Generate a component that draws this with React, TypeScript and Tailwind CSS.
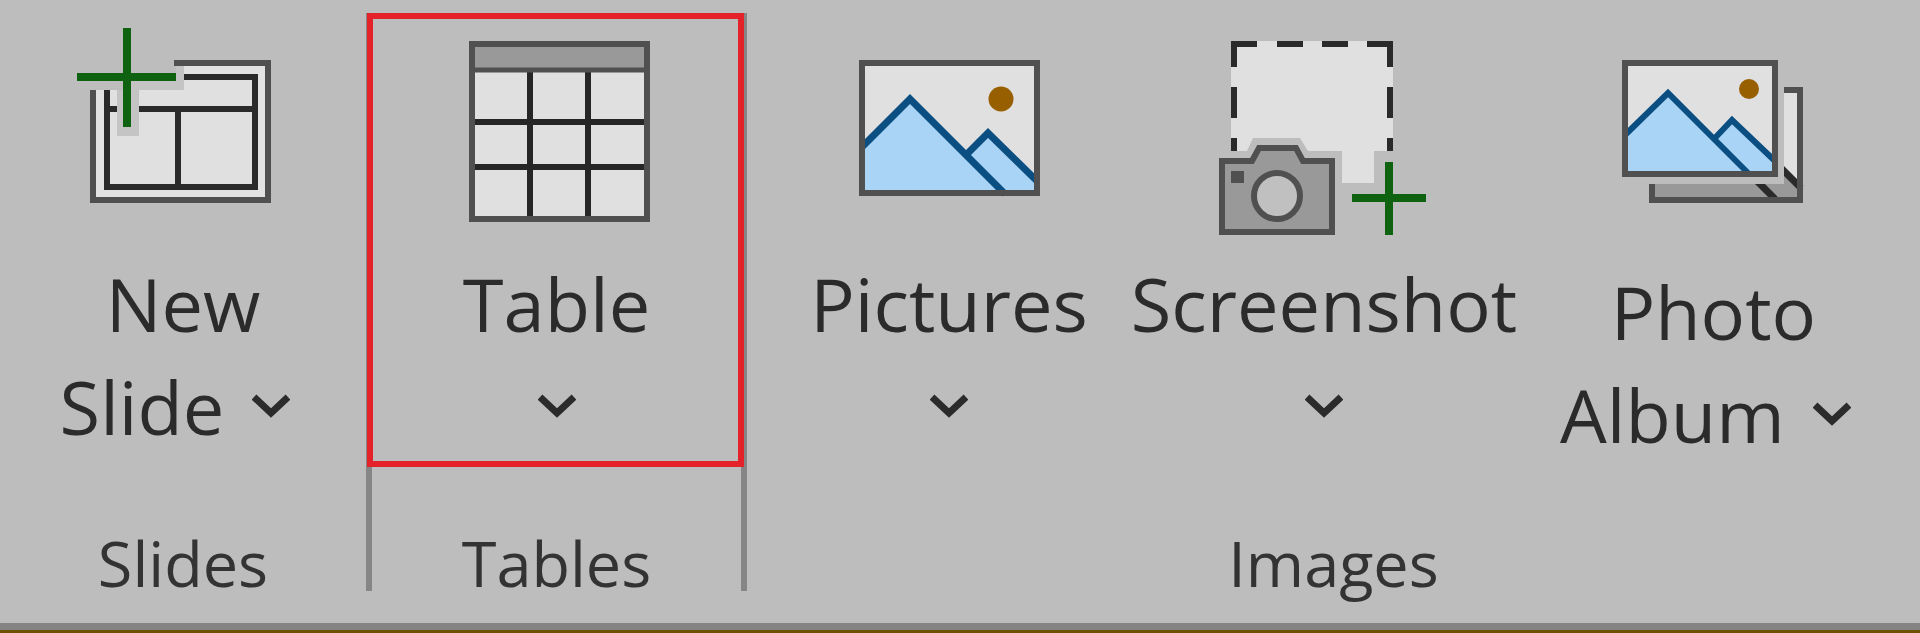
import type { ReactNode } from "react";

function Icon({ children }: { children: ReactNode }) {
  return (
    <svg viewBox="0 0 216 208" className="block h-[208px] w-[216px] shrink-0" fill="none" aria-hidden="true">
      {children}
    </svg>
  );
}

function Chevron() {
  return (
    <svg viewBox="0 0 38 26" className="block h-[26px] w-[38px] shrink-0" fill="none" aria-hidden="true">
      <path d="M2 3 L19 19 L36 3" stroke="#2b2b2b" strokeWidth="7" />
    </svg>
  );
}

function NewSlideIcon() {
  return (
    <Icon>
      <rect x="18" y="35" width="175" height="137" fill="#e2e2e2" stroke="#505050" strokeWidth="6" />
      <rect x="32" y="49" width="148" height="110" fill="#e0e0e0" stroke="#2a2a2a" strokeWidth="6" />
      <path d="M32 81 H180 M103 81 V159" stroke="#2a2a2a" strokeWidth="6" />
      {/* gap around the plus */}
      <path d="M14 30 H99 V38 H109 V62 H64 V108 H42 V62 H14 Z" fill="#bdbdbd" />
      <path d="M101 38 H109 V62 H64 V108 H42 V62 H48 V53 H101 Z" fill="#c4c4c4" />
      <path d="M52 0 V99 M2 49 H101" stroke="#0f620f" strokeWidth="8" />
    </Icon>
  );
}

function TableIcon() {
  return (
    <Icon>
      <rect x="23" y="16" width="175" height="175" fill="#e0e0e0" />
      <rect x="23" y="16" width="175" height="26" fill="#999999" />
      <path d="M81 44 V191 M139 44 V191 M23 94 H198 M23 139 H198" stroke="#262626" strokeWidth="6" />
      <path d="M23 42 H198" stroke="#505050" strokeWidth="5" />
      <rect x="23" y="16" width="175" height="175" stroke="#505050" strokeWidth="6" />
    </Icon>
  );
}

function PicturesIcon() {
  return (
    <Icon>
      <rect x="21" y="35" width="175" height="130" fill="#e0e0e0" />
      <path d="M21 119 L69 71 L126 126 L147 105 L196 153 V165 H21 Z" fill="#a9d4f5" />
      <path d="M21 119 L69 71 L164 166 M126 126 L147 105 L196 153" stroke="#0b4f82" strokeWidth="7" />
      <circle cx="160" cy="71" r="12.5" fill="#985f00" />
      <rect x="21" y="35" width="175" height="130" stroke="#505050" strokeWidth="6" />
    </Icon>
  );
}

function ScreenshotIcon() {
  return (
    <Icon>
      <path d="M15 13 H177 V123 H158 V155 H126 V123 H92 L84 110 H37 L31 123 H15 Z" fill="#e0e0e0" />
      <path
        d="M15 16 H41 M61 16 H87 M106 16 H132 M151 16 H177 M18 13 V39 M18 59 V90 M18 110 V123 M174 13 V39 M174 59 V90 M174 110 V123"
        stroke="#2a2a2a"
        strokeWidth="6"
      />
      <path d="M6 133 H36 L43 120 H80 L87 133 H116 V204 H6 Z" fill="#999999" stroke="#505050" strokeWidth="6" />
      <rect x="15" y="143" width="13" height="12" fill="#505050" />
      <circle cx="61" cy="168" r="23" fill="#c0c0c0" stroke="#505050" strokeWidth="6" />
      <path d="M173 134 V207 M136 170 H210" stroke="#0f620f" strokeWidth="8" />
    </Icon>
  );
}

function PhotoAlbumIcon() {
  return (
    <Icon>
      {/* photo behind */}
      <path d="M179 62 H195 V172 H179 Z" fill="#e0e0e0" />
      <path d="M47 156 H179 V142 L195 158 V172 H47 Z" fill="#999999" />
      <path d="M151 152 L170 171 M176 140 L196 160" stroke="#2a2a2a" strokeWidth="7" />
      <path d="M179 62 H195 V172 H47 V156" stroke="#505050" strokeWidth="6" />
      <rect x="14" y="29" width="165" height="127" fill="#bdbdbd" />
      {/* photo in front */}
      <rect x="20" y="35" width="150" height="111" fill="#e0e0e0" />
      <path d="M20 107 L63 65 L110 111 L127 92 L170 133 V146 H20 Z" fill="#a9d4f5" />
      <path d="M20 107 L63 65 L144 146 M109 111 L127 92 L170 133" stroke="#0b4f82" strokeWidth="6" />
      <circle cx="144" cy="61" r="10" fill="#985f00" />
      <rect x="20" y="35" width="150" height="111" stroke="#505050" strokeWidth="6" />
    </Icon>
  );
}

function Group({ label, children }: { label: string; children: ReactNode }) {
  return (
    <section aria-label={label} className="flex min-w-0 flex-col justify-between">
      {children}
      <h2 className="mt-14 text-center text-[63px] leading-[80px] text-[#333333]">{label}</h2>
    </section>
  );
}

function Divider() {
  return <div className="mb-3 bg-[#868686]" />;
}

const buttonClass = "flex flex-col items-center pt-[15px]";
const lineClass = "flex h-[103px] items-center justify-center";

export default function App() {
  return (
    <div className="bg-[#bdbdbd] font-['Open_Sans','Noto_Sans',sans-serif] text-[74px] leading-[103px] text-[#2b2b2b]">
      <main className="grid grid-cols-[366fr_6px_369fr_6px_1173fr] pt-[13px] pb-5">
        <Group label="Slides">
          <button type="button" className={buttonClass}>
            <NewSlideIcon />
            <span className="mt-4">New</span>
            <span className={`${lineClass} gap-7 pr-4`}>
              Slide <Chevron />
            </span>
          </button>
        </Group>

        <Divider />

        <Group label="Tables">
          <div className="relative pb-[9px]">
            <button type="button" className={`${buttonClass} w-full`}>
              <TableIcon />
              <span className="mt-4">Table</span>
              <span className={lineClass}>
                <Chevron />
              </span>
            </button>
            {/* red highlight, runs over both dividers */}
            <div className="pointer-events-none absolute inset-y-0 -right-[3px] -left-[5px] border-[6px] border-[#e42229]" />
          </div>
        </Group>

        <Divider />

        <Group label="Images">
          <div className="flex items-start justify-center gap-[43px] pl-[10px]">
            <button type="button" className={buttonClass}>
              <PicturesIcon />
              <span className="mt-4">Pictures</span>
              <span className={lineClass}>
                <Chevron />
              </span>
            </button>
            <button type="button" className={buttonClass}>
              <ScreenshotIcon />
              <span className="mt-4">Screenshot</span>
              <span className={lineClass}>
                <Chevron />
              </span>
            </button>
            <button type="button" className={buttonClass}>
              <PhotoAlbumIcon />
              <span className="mt-6">Photo</span>
              <span className={`${lineClass} gap-7 pr-4`}>
                Album <Chevron />
              </span>
            </button>
          </div>
        </Group>
      </main>
      <footer className="h-[10px] border-b-[3px] border-[#6b5000] bg-[#848484]" />
    </div>
  );
}
